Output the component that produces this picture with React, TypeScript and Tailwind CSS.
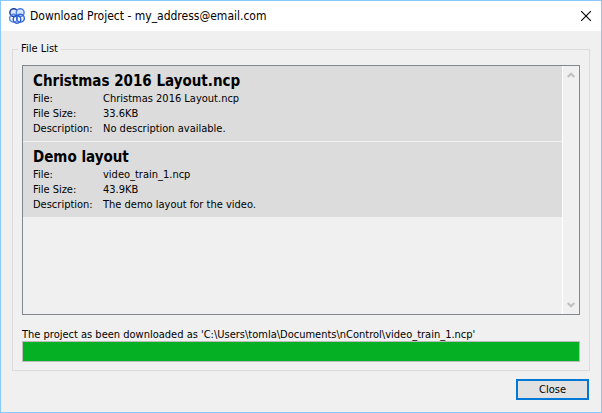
import React from 'react';

interface ProjectFile {
  name: string;
  file: string;
  size: string;
  description: string;
}

const files: ProjectFile[] = [
  {
    name: 'Christmas 2016 Layout.ncp',
    file: 'Christmas 2016 Layout.ncp',
    size: '33.6KB',
    description: 'No description available.',
  },
  {
    name: 'Demo layout',
    file: 'video_train_1.ncp',
    size: '43.9KB',
    description: 'The demo layout for the video.',
  },
];

const AppIcon: React.FC = () => (
  <svg width="16" height="16" viewBox="0 0 16 16" fill="none" strokeWidth="1.5" aria-hidden="true">
    <circle cx="4.8" cy="4.6" r="3.9" fill="#dbe6fb" stroke="#1d3f9e" />
    <circle cx="11.2" cy="4.6" r="3.9" fill="#dbe6fb" stroke="#4a80e8" />
    <circle cx="4.6" cy="10.2" r="3.9" stroke="#5588ec" />
    <circle cx="11.4" cy="10.2" r="3.9" stroke="#3468dc" />
    <circle cx="8" cy="11.4" r="3.8" stroke="#2a5bd0" />
  </svg>
);

const FileRow: React.FC<{ item: ProjectFile }> = ({ item }) => (
  <li className="bg-[#dcdcdc] px-[10px] py-[5px]">
    <h2 className="text-[15px] leading-5 font-bold">{item.name}</h2>
    <dl className="grid grid-cols-[70px_1fr] leading-[15px]">
      <dt>File:</dt>
      <dd>{item.file}</dd>
      <dt>File Size:</dt>
      <dd>{item.size}</dd>
      <dt>Description:</dt>
      <dd>{item.description}</dd>
    </dl>
  </li>
);

export default function App() {
  return (
    <main className="flex min-h-screen flex-col border border-[#8bc8fb] bg-[#f0f0f0] font-['DejaVu_Sans_Condensed','DejaVu_Sans',sans-serif] text-[11px] text-black">
      <header className="flex h-[30px] shrink-0 items-center bg-white pr-[10px] pl-2">
        <AppIcon />
        <h1 className="ml-[5px] flex-1 text-xs">Download Project - my_address@email.com</h1>
        <button type="button" aria-label="Close window">
          <svg width="10" height="10" viewBox="0 0 10 10" stroke="#000" strokeWidth="1.1" aria-hidden="true">
            <path d="M0 0L10 10M10 0L0 10" />
          </svg>
        </button>
      </header>

      <div className="flex flex-1 flex-col px-[11px] pt-[10px] pb-3">
        <fieldset className="border border-[#dcdcdc] px-[9px] pb-2">
          <legend className="-ml-1 px-[3px] leading-4">File List</legend>

          <div className="mt-2 flex min-h-[250px] border border-[#828790]">
            <ul className="flex flex-1 flex-col gap-px">
              {files.map((item) => (
                <FileRow key={item.file} item={item} />
              ))}
            </ul>
            <div className="flex w-[17px] flex-col items-center justify-between border-l border-white py-[6px] text-[#bfbfbf]">
              <svg width="8" height="6" viewBox="0 0 8 6" fill="none" stroke="currentColor" strokeWidth="2" aria-hidden="true">
                <path d="M0.7 5L4 1.7L7.3 5" />
              </svg>
              <svg width="8" height="6" viewBox="0 0 8 6" fill="none" stroke="currentColor" strokeWidth="2" aria-hidden="true">
                <path d="M0.7 1L4 4.3L7.3 1" />
              </svg>
            </div>
          </div>

          <label htmlFor="download" className="mt-[14px] block leading-3">
            The project as been downloaded as 'C:\Users\tomla\Documents\nControl\video_train_1.ncp'
          </label>
          <progress
            id="download"
            value={100}
            max={100}
            className="block h-[21px] w-full appearance-none border border-[#bcbcbc] bg-[#e6e6e6] [&::-webkit-progress-bar]:bg-[#e6e6e6] [&::-webkit-progress-value]:bg-[#06b025]"
          />
        </fieldset>

        <button
          type="button"
          className="mt-2 mr-px h-[21px] w-[73px] self-end border-2 border-[#0078d7] bg-[#e1e1e1] text-[11px] leading-4"
        >
          Close
        </button>
      </div>
    </main>
  );
}
